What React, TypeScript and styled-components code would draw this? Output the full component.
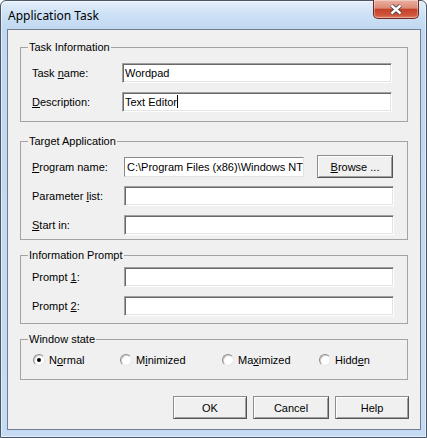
import React from "react";
import styled, { createGlobalStyle } from "styled-components";

const GlobalStyle = createGlobalStyle`
  *, *::before, *::after { box-sizing: border-box; }
  html, body { margin: 0; padding: 0; background: #fff; }
  body { font-family: "Liberation Sans", Arial, sans-serif; font-size: 11px; color: #000; }
`;

const Window = styled.div`
  width: 427px;
  height: 438px;
  display: flex;
  flex-direction: column;
  padding: 0 5px 7px 6px;
  border: 1px solid #4b5768;
  border-radius: 6px 6px 0 0;
  background: linear-gradient(180deg, #e4effa 0px, #cfe2f6 12px, #c0d8f1 28px, #c4dbf3 100%);
  box-shadow: inset 0 0 0 1px rgba(255, 255, 255, 0.5);
`;

const TitleBar = styled.div`
  height: 28px;
  display: flex;
  align-items: center;
  justify-content: space-between;
  padding-left: 1px;
`;

const Title = styled.span`
  font-family: "Noto Sans", "Open Sans", sans-serif;
  font-size: 12px;
  color: #000;
  margin-top: 1px;
`;

const CloseButton = styled.div`
  align-self: flex-start;
  width: 46px;
  height: 19px;
  margin-top: -1px;
  margin-right: 2px;
  border: 1px solid #6e2a1f;
  border-top: none;
  border-radius: 0 0 5px 5px;
  background: linear-gradient(180deg, #eab0a2 0%, #dc8a76 45%, #c4412a 52%, #cf563e 85%, #e0836b 100%);
  box-shadow: inset 0 0 0 1px rgba(255, 255, 255, 0.35);
  display: flex;
  align-items: center;
  justify-content: center;
`;

const Client = styled.div`
  flex: 1;
  display: flex;
  flex-direction: column;
  background: #f0f0f0;
  border: 1px solid #6f7d8e;
  padding: 11px 12px 0 12px;
`;

const Group = styled.fieldset<{ $mt: number; $pt: number; $pb: number }>`
  margin: ${(p) => p.$mt}px 0 0 0;
  padding: ${(p) => p.$pt}px 12px ${(p) => p.$pb}px 11px;
  border: 1px solid #a3a3a3;
  min-width: 0;
`;

const Legend = styled.legend`
  padding: 0 1px;
  margin-left: -4px;
  font-size: 11px;
  line-height: 13px;
`;

const Row = styled.div<{ $label: number }>`
  display: grid;
  grid-template-columns: ${(p) => p.$label}px 270px;
  align-items: center;
  height: 29px;
`;

const Label = styled.span`
  font-size: 11px;
  white-space: nowrap;
`;

const Field = styled.div<{ $flat?: boolean }>`
  height: 20px;
  background: #fff;
  border: 1px solid;
  border-color: ${(p) => (p.$flat ? "#8a8a8a #e3e3e3 #e3e3e3 #8a8a8a" : "#a0a0a0 #fff #fff #a0a0a0")};
  box-shadow: ${(p) => (p.$flat ? "none" : "inset 1px 1px 0 #696969, inset -1px -1px 0 #e3e3e3")};
  padding: 0 2px;
  font-size: 11px;
  white-space: nowrap;
  overflow: hidden;
  display: flex;
  align-items: center;
`;

const FieldWithButton = styled.div`
  display: flex;
  align-items: center;
  gap: 13px;
  & > ${Field} {
    width: 180px;
    flex: none;
  }
`;

const Caret = styled.span`
  display: inline-block;
  width: 1px;
  height: 13px;
  background: #000;
`;

const Button = styled.div<{ $w: number }>`
  width: ${(p) => p.$w}px;
  height: 23px;
  flex: none;
  background: #f0f0f0;
  border: 1px solid;
  border-color: #8c8c8c #555 #555 #8c8c8c;
  box-shadow: inset 1px 1px 0 #fff, inset -1px -1px 0 #a0a0a0;
  display: flex;
  align-items: center;
  justify-content: center;
  font-size: 11px;
`;

const RadioRow = styled.div`
  display: grid;
  grid-template-columns: 87px 102px 97px auto;
  align-items: center;
  height: 20px;
  padding-left: 1px;
`;

const RadioItem = styled.div`
  display: flex;
  align-items: center;
  gap: 4px;
`;

const RadioCircle = styled.span<{ $checked?: boolean }>`
  width: 12px;
  height: 12px;
  border-radius: 50%;
  background: #fff;
  border: 1px solid;
  border-color: #8c8c8c #e6e6e6 #e6e6e6 #8c8c8c;
  box-shadow: inset 1px 1px 0 #cfcfcf;
  display: flex;
  align-items: center;
  justify-content: center;
  &::after {
    content: "";
    width: 4px;
    height: 4px;
    border-radius: 50%;
    background: ${(p) => (p.$checked ? "#000" : "transparent")};
  }
`;

const ButtonBar = styled.div`
  display: flex;
  justify-content: flex-end;
  gap: 6px;
  margin-top: 16px;
  margin-right: -1px;
`;

function Radio({ checked, children }: { checked?: boolean; children: React.ReactNode }) {
  return (
    <RadioItem>
      <RadioCircle $checked={checked} />
      <Label>{children}</Label>
    </RadioItem>
  );
}

export default function App() {
  return (
    <>
      <GlobalStyle />
      <Window>
        <TitleBar>
          <Title>Application Task</Title>
          <CloseButton>
            <svg width="14" height="11" viewBox="0 0 14 11">
              <path d="M2.5 1.5 L11.5 9.5 M11.5 1.5 L2.5 9.5" stroke="#3d3d3d" strokeWidth="4.2" />
              <path d="M2.5 1.5 L11.5 9.5 M11.5 1.5 L2.5 9.5" stroke="#fff" strokeWidth="2.4" />
            </svg>
          </CloseButton>
        </TitleBar>
        <Client>
          <Group $mt={0} $pt={4} $pb={5}>
            <Legend>Task Information</Legend>
            <Row $label={90}>
              <Label>Task <u>n</u>ame:</Label>
              <Field>Wordpad</Field>
            </Row>
            <Row $label={90}>
              <Label><u>D</u>escription:</Label>
              <Field>Text Editor<Caret /></Field>
            </Row>
          </Group>

          <Group $mt={13} $pt={4} $pb={0}>
            <Legend>Target Application</Legend>
            <Row $label={92}>
              <Label><u>P</u>rogram name:</Label>
              <FieldWithButton>
                <Field $flat>C:\Program Files (x86)\Windows NT\</Field>
                <Button $w={76}><u>B</u>rowse ...</Button>
              </FieldWithButton>
            </Row>
            <Row $label={92}>
              <Label>Parameter <u>l</u>ist:</Label>
              <Field />
            </Row>
            <Row $label={92}>
              <Label><u>S</u>tart in:</Label>
              <Field />
            </Row>
          </Group>

          <Group $mt={9} $pt={0} $pb={3}>
            <Legend>Information Prompt</Legend>
            <Row $label={92}>
              <Label>Prompt <u>1</u>:</Label>
              <Field />
            </Row>
            <Row $label={92}>
              <Label>Prompt <u>2</u>:</Label>
              <Field />
            </Row>
          </Group>

          <Group $mt={9} $pt={4} $pb={9}>
            <Legend>Window state</Legend>
            <RadioRow>
              <Radio checked>N<u>o</u>rmal</Radio>
              <Radio>M<u>i</u>nimized</Radio>
              <Radio>Ma<u>x</u>imized</Radio>
              <Radio>Hidd<u>e</u>n</Radio>
            </RadioRow>
          </Group>

          <ButtonBar>
            <Button $w={74}>OK</Button>
            <Button $w={76}>Cancel</Button>
            <Button $w={74}>Help</Button>
          </ButtonBar>
        </Client>
      </Window>
    </>
  );
}
